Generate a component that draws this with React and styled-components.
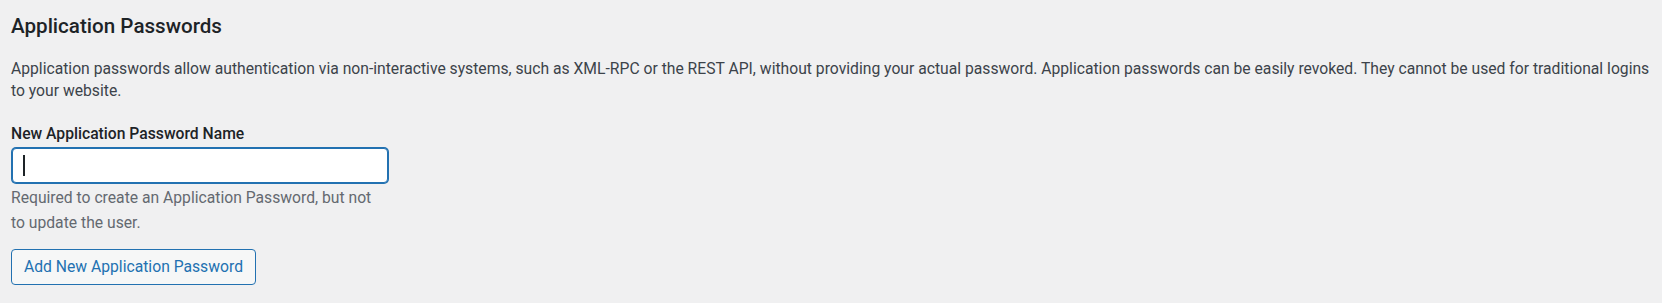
import React from "react";
import styled, { createGlobalStyle } from "styled-components";

const GlobalStyle = createGlobalStyle`
  html, body {
    margin: 0;
    padding: 0;
    background: #f0f0f1;
  }
  body {
    font-family: Roboto, "Noto Sans", sans-serif;
    color: #3c434a;
  }
`;

const Page = styled.section`
  padding: 12px 11px 0 11px;
  box-sizing: border-box;
  width: 1662px;
`;

const Heading = styled.h2`
  margin: 0;
  font-size: 20.6px;
  line-height: 28px;
  font-weight: 500;
  color: #1d2327;
`;

const Description = styled.p`
  margin: 18px 0 0 0;
  max-width: 1640px;
  font-size: 15.7px;
  line-height: 22.4px;
  color: #3c434a;
`;

const Field = styled.div`
  margin-top: 20px;
  display: flex;
  flex-direction: column;
  align-items: flex-start;
`;

const Label = styled.label`
  font-size: 15.7px;
  line-height: 22.4px;
  font-weight: 500;
  color: #1d2327;
`;

const InputWrap = styled.div`
  position: relative;
  margin-top: 3px;
  margin-left: 1px;
`;

const Input = styled.input`
  display: block;
  box-sizing: border-box;
  width: 376px;
  height: 35px;
  margin: 0;
  padding: 0 10px;
  border: 1px solid #2271b1;
  border-radius: 4px;
  box-shadow: 0 0 0 1px #2271b1;
  background: #fff;
  font-family: Roboto, "Noto Sans", sans-serif;
  font-size: 15.7px;
  color: #2c3338;
  outline: none;
`;

const Caret = styled.span`
  position: absolute;
  left: 11px;
  top: 7px;
  width: 2px;
  height: 21px;
  background: #1d2327;
  pointer-events: none;
`;

const Help = styled.p`
  margin: 3px 0 0 0;
  max-width: 362px;
  font-size: 15.7px;
  line-height: 24.3px;
  color: #646970;
`;

const Button = styled.button`
  margin-top: 14px;
  box-sizing: border-box;
  height: 36px;
  padding: 0 12px;
  border: 1px solid #2271b1;
  border-radius: 4px;
  background: #f6f7f7;
  color: #2271b1;
  font-family: Roboto, "Noto Sans", sans-serif;
  font-size: 15.7px;
  line-height: 34px;
  white-space: nowrap;
  cursor: pointer;
`;

export default function App() {
  return (
    <>
      <GlobalStyle />
      <Page>
        <Heading>Application Passwords</Heading>
        <Description>
          Application passwords allow authentication via non-interactive systems, such as XML-RPC or the REST API,
          without providing your actual password. Application passwords can be easily revoked. They cannot be used
          for traditional logins to your website.
        </Description>
        <Field>
          <Label htmlFor="new_application_password_name">New Application Password Name</Label>
          <InputWrap>
            <Input id="new_application_password_name" type="text" defaultValue="" />
            <Caret />
          </InputWrap>
          <Help>Required to create an Application Password, but not to update the user.</Help>
          <Button type="button">Add New Application Password</Button>
        </Field>
      </Page>
    </>
  );
}
